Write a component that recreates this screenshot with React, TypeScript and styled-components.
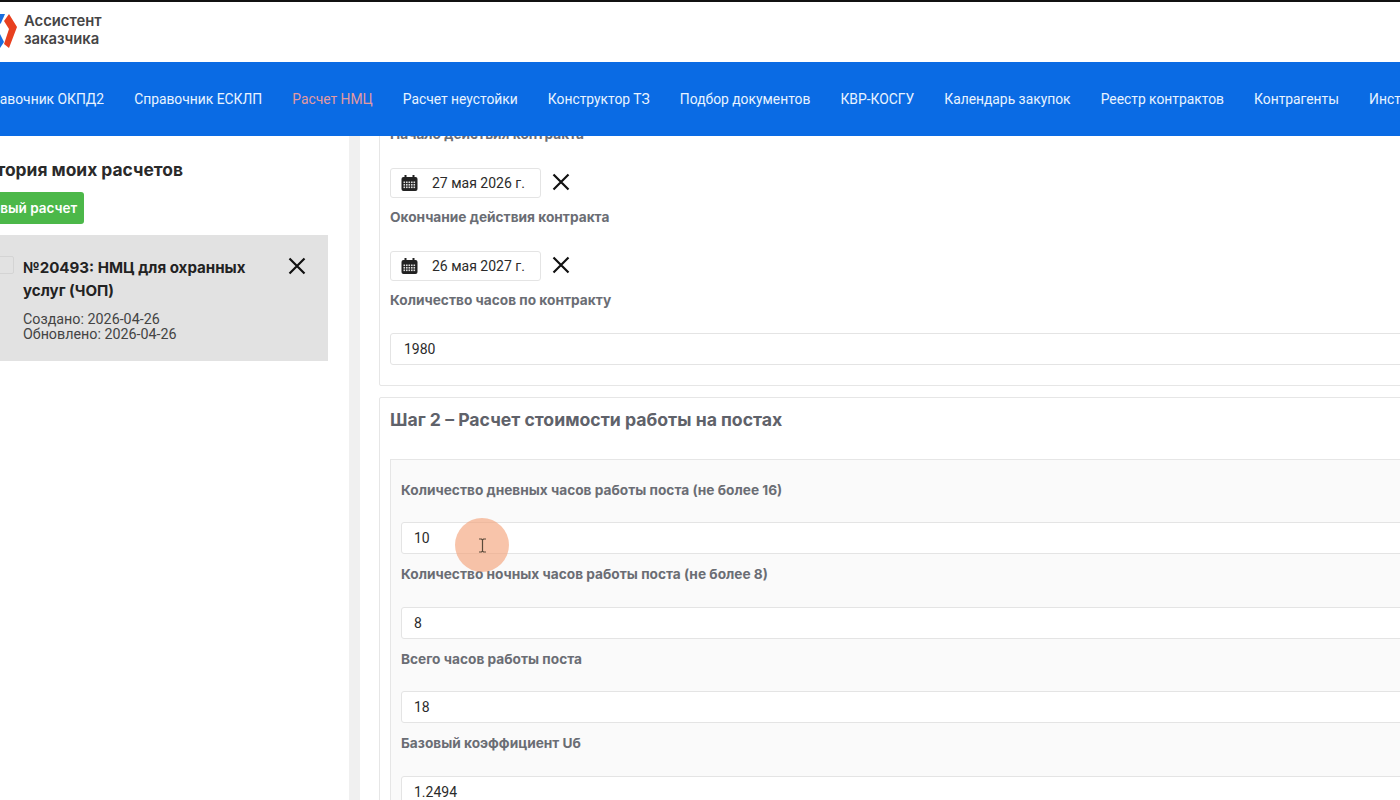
import styled, { createGlobalStyle } from "styled-components";

const NAV_ITEMS = [
  { label: "Справочник ОКПД2" },
  { label: "Справочник ЕСКЛП" },
  { label: "Расчет НМЦ", active: true },
  { label: "Расчет неустойки" },
  { label: "Конструктор ТЗ" },
  { label: "Подбор документов" },
  { label: "КВР-КОСГУ" },
  { label: "Календарь закупок" },
  { label: "Реестр контрактов" },
  { label: "Контрагенты" },
  { label: "Инструкции" },
];

const POST_FIELDS = [
  { label: "Количество дневных часов работы поста (не более 16)", value: "10" },
  { label: "Количество ночных часов работы поста (не более 8)", value: "8" },
  { label: "Всего часов работы поста", value: "18" },
  { label: "Базовый коэффициент Uб", value: "1.2494" },
];

const GlobalStyle = createGlobalStyle`
  html, body {
    margin: 0;
    height: 800px;
    overflow: hidden;
    background: #fff;
    font-family: Roboto, "Noto Sans", sans-serif;
  }
`;

const Page = styled.div`
  position: relative;
  width: 1400px;
  height: 800px;
  overflow: hidden;
  display: flex;
  flex-direction: column;
  border-top: 2px solid #111;
  box-sizing: border-box;
`;

const Header = styled.header`
  height: 60px;
  flex-shrink: 0;
  display: flex;
  align-items: center;
  gap: 7px;
  background: #fff;
`;

const LogoText = styled.div`
  font-family: Inter, sans-serif;
  font-size: 14.8px;
  line-height: 18px;
  font-weight: 600;
  color: #454545;
  margin-top: -4px;
`;

const Nav = styled.nav`
  position: relative;
  z-index: 2;
  height: 74px;
  flex-shrink: 0;
  display: flex;
  align-items: center;
  gap: 30.1px;
  margin-left: -25px;
  width: 1500px;
  background: #0a6be4;
`;

const NavLink = styled.span<{ $active?: boolean }>`
  font-size: 13.85px;
  white-space: nowrap;
  color: ${({ $active }) => ($active ? "#e39a9f" : "#e8f3ff")};
`;

const Body = styled.div`
  flex: 1;
  min-height: 0;
  display: flex;
`;

const Sidebar = styled.aside`
  width: 349px;
  flex-shrink: 0;
  box-sizing: border-box;
  padding: 23px 21px 0 0;
  overflow: hidden;
`;

const HistoryTitle = styled.h2`
  margin: 0 0 11px -27px;
  font-family: Inter, sans-serif;
  font-size: 17.4px;
  line-height: 22px;
  font-weight: 700;
  color: #2a2a2a;
  white-space: nowrap;
`;

const NewButton = styled.button`
  display: block;
  height: 32px;
  width: 102px;
  margin: 0 0 11px -18px;
  padding: 0 9px 0 0;
  border: 0;
  border-radius: 3px;
  background: #4cb849;
  color: #fff;
  font: 600 13.5px Inter, sans-serif;
  text-align: right;
  white-space: nowrap;
`;

const CalcCard = styled.div`
  height: 126px;
  box-sizing: border-box;
  background: #e2e2e2;
  padding: 21px 21px 0 23px;
  position: relative;
  display: flex;
  justify-content: space-between;
`;

const CalcCheckbox = styled.span`
  position: absolute;
  left: -4px;
  top: 21px;
  width: 16px;
  height: 16px;
  border: 1px solid #d4d4d4;
  border-radius: 2px;
`;

const CalcInfo = styled.div`
  width: 240px;
`;

const CalcTitle = styled.div`
  font-family: Inter, sans-serif;
  font-size: 15.1px;
  line-height: 23px;
  font-weight: 700;
  color: #222;
  margin-bottom: 10px;
`;

const CalcMeta = styled.div`
  font-size: 14.3px;
  line-height: 14.5px;
  color: #444;
`;

const Gutter = styled.div`
  width: 11px;
  flex-shrink: 0;
  background: #f0f0f0;
`;

const Main = styled.main`
  flex: 1;
  min-width: 0;
  padding-left: 19px;
  display: flex;
  flex-direction: column;
  gap: 11px;
`;

const Card = styled.section`
  width: 1100px;
  box-sizing: border-box;
  flex-shrink: 0;
  border: 1px solid #e6e6e6;
  border-radius: 2px;
  background: #fff;
`;

const ContractCard = styled(Card)`
  margin-top: -13px;
  padding: 0 10px 20px 10px;
`;

const StepCard = styled(Card)`
  padding: 10px 10px 0 10px;
`;

const FieldLabel = styled.div`
  font-family: Inter, sans-serif;
  font-size: 13.7px;
  line-height: 20px;
  font-weight: 700;
  color: #6a6d74;
  white-space: nowrap;
`;

const DateLabel = styled(FieldLabel)`
  margin-bottom: 24px;
`;

const DateRow = styled.div`
  display: flex;
  align-items: center;
  gap: 10px;
  margin-bottom: 9px;
`;

const DateBox = styled.div`
  width: 151px;
  height: 30px;
  box-sizing: border-box;
  display: flex;
  align-items: center;
  gap: 14px;
  padding-left: 10px;
  border: 1px solid #e4e4e4;
  border-radius: 3px;
  font-size: 14px;
  color: #2b2b2b;
`;

const HoursLabel = styled(FieldLabel)`
  margin-bottom: 23px;
`;

const TextField = styled.div`
  height: 32px;
  box-sizing: border-box;
  display: flex;
  align-items: center;
  padding-left: 12px;
  border: 1px solid #e4e4e4;
  border-radius: 3px;
  background: #fff;
  font-size: 14px;
  color: #2b2b2b;
`;

const ContractField = styled(TextField)`
  padding-left: 13px;
`;

const StepTitle = styled.h3`
  margin: 0 0 27px;
  font-family: Inter, sans-serif;
  font-size: 17.65px;
  line-height: 24px;
  font-weight: 700;
  color: #5f626a;
`;

const InnerPanel = styled.div`
  border: 1px solid #e6e6e6;
  background: #fafafa;
  padding: 19.6px 10px 0 10px;
`;

const PostField = styled.div`
  margin-bottom: 10.2px;
`;

const PostLabel = styled(FieldLabel)`
  margin-bottom: 22.4px;
`;

const CloseButton = styled.span`
  display: flex;
  flex-shrink: 0;
  margin-top: -3px;
`;

const CalcClose = styled.span`
  display: flex;
  flex-shrink: 0;
  height: 20px;
`;

const CursorHalo = styled.div`
  position: absolute;
  left: 455px;
  top: 516px;
  width: 54px;
  height: 54px;
  border-radius: 50%;
  background: rgba(243, 160, 118, 0.62);
  display: flex;
  align-items: center;
  justify-content: center;
  z-index: 3;
`;

const LogoMark = () => (
  <svg width="17" height="36" viewBox="0 0 17 36">
    <polygon points="9,0 17,13 9,34 4,30 9,15 4,7" fill="#e8401f" />
    <polygon points="0,0 5,0 1,9 0,10" fill="#1a6fe0" />
    <polygon points="0,20 4,28 0,34" fill="#1a6fe0" />
  </svg>
);

const CalendarIcon = () => (
  <svg width="17" height="16" viewBox="0 0 17 16">
    <rect x="0.5" y="2" width="16" height="14" rx="2" fill="#222" />
    <rect x="3.5" y="0" width="2" height="4" fill="#222" />
    <rect x="11.5" y="0" width="2" height="4" fill="#222" />
    <g fill="#ddd">
      {[6.5, 9, 11.5].flatMap((y) =>
        [2.5, 5, 7.5, 10, 12.5].map((x) => (
          <rect key={`${x}-${y}`} x={x} y={y} width="1.6" height="1.6" />
        )),
      )}
    </g>
  </svg>
);

const CloseIcon = () => (
  <svg width="20" height="20" viewBox="0 0 20 20">
    <path d="M2.5 2.5 L17.5 17.5 M17.5 2.5 L2.5 17.5" stroke="#111" strokeWidth="2.2" fill="none" />
  </svg>
);

const IBeam = () => (
  <svg width="9" height="15" viewBox="0 0 9 15">
    <path d="M1 1 H3.5 L4.5 2 L5.5 1 H8 M4.5 2 V13 M1 14 H3.5 L4.5 13 L5.5 14 H8" stroke="#5a4a3a" strokeWidth="1.2" fill="none" />
  </svg>
);

const App = () => (
  <Page>
    <GlobalStyle />
    <Header>
      <LogoMark />
      <LogoText>
        Ассистент
        <br />
        заказчика
      </LogoText>
    </Header>
    <Nav>
      {NAV_ITEMS.map(({ label, active }) => (
        <NavLink key={label} $active={active}>
          {label}
        </NavLink>
      ))}
    </Nav>
    <Body>
      <Sidebar>
        <HistoryTitle>История моих расчетов</HistoryTitle>
        <NewButton>Новый расчет</NewButton>
        <CalcCard>
          <CalcCheckbox />
          <CalcInfo>
            <CalcTitle>№20493: НМЦ для охранных услуг (ЧОП)</CalcTitle>
            <CalcMeta>Создано: 2026-04-26</CalcMeta>
            <CalcMeta>Обновлено: 2026-04-26</CalcMeta>
          </CalcInfo>
          <CalcClose>
            <CloseIcon />
          </CalcClose>
        </CalcCard>
      </Sidebar>
      <Gutter />
      <Main>
        <ContractCard>
          <DateLabel>Начало действия контракта</DateLabel>
          <DateRow>
            <DateBox>
              <CalendarIcon />
              27 мая 2026 г.
            </DateBox>
            <CloseButton>
              <CloseIcon />
            </CloseButton>
          </DateRow>
          <DateLabel>Окончание действия контракта</DateLabel>
          <DateRow>
            <DateBox>
              <CalendarIcon />
              26 мая 2027 г.
            </DateBox>
            <CloseButton>
              <CloseIcon />
            </CloseButton>
          </DateRow>
          <HoursLabel>Количество часов по контракту</HoursLabel>
          <ContractField>1980</ContractField>
        </ContractCard>
        <StepCard>
          <StepTitle>Шаг 2 – Расчет стоимости работы на постах</StepTitle>
          <InnerPanel>
            {POST_FIELDS.map(({ label, value }) => (
              <PostField key={label}>
                <PostLabel>{label}</PostLabel>
                <TextField>{value}</TextField>
              </PostField>
            ))}
          </InnerPanel>
        </StepCard>
      </Main>
    </Body>
    <CursorHalo>
      <IBeam />
    </CursorHalo>
  </Page>
);

export default App;
